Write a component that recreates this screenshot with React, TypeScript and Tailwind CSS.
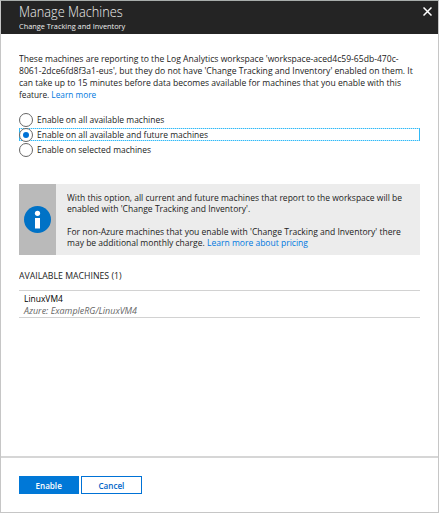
import type { ReactNode } from "react";

function Radio({ label, checked }: { label: string; checked?: boolean }) {
  return (
    <label className="relative flex h-[15px] items-center">
      {checked && (
        <span className="absolute inset-x-0 top-px bottom-px bg-[repeating-linear-gradient(90deg,#30baf8_0px,#30baf8_1px,#b4e6fc_1px,#b4e6fc_2px)] p-px">
          <span className="block h-full bg-white" />
        </span>
      )}
      <span className="relative flex size-[14px] shrink-0 items-center justify-center rounded-full border border-[#666] bg-white">
        {checked && <span className="size-[6px] rounded-full bg-[#0072d6]" />}
      </span>
      <span className="mt-[2px] ml-1 origin-left scale-x-[0.89] whitespace-nowrap">{label}</span>
    </label>
  );
}

function Line({ children, stretch = "scale-x-[0.89]" }: { children: ReactNode; stretch?: string }) {
  return <div className={`w-max origin-left whitespace-nowrap ${stretch}`}>{children}</div>;
}

export default function App() {
  return (
    <div className="flex h-[513px] w-[439px] flex-col overflow-hidden border border-[#c6c6c6] border-t-[#a8adab] bg-white font-['Open_Sans','Noto_Sans',sans-serif] text-[9.5px] text-[#222]">
      <header className="flex h-[33px] shrink-0 justify-between bg-[#242424] pl-[18px] text-[#eee]">
        <div>
          <h1 className="mt-[2px] h-[18px] origin-left scale-x-[0.91] text-[14px] leading-[18px] font-light">Manage Machines</h1>
          <p className="h-[10px] origin-left scale-x-[0.92] text-[8px] leading-[9px]">Change Tracking and Inventory</p>
        </div>
        <svg className="mt-[6px] mr-[6px] size-[9px]" viewBox="0 0 9 9" stroke="#fff" strokeWidth="1.5">
          <path d="M.5.5l8 8M8.5.5l-8 8" />
        </svg>
      </header>
      <main className="flex flex-1 flex-col px-[18px]">
        <div className="mt-[19px] h-[48px] w-[401px] leading-[12px]">
          <Line stretch="scale-x-[0.904]">These machines are reporting to the Log Analytics workspace 'workspace-aced4c59-65db-470c-</Line>
          <Line stretch="scale-x-[0.904]">8061-2dce6fd8f3a1-eus', but they do not have 'Change Tracking and Inventory' enabled on them. It</Line>
          <Line stretch="scale-x-[0.9]">can take up to 15 minutes before data becomes available for machines that you enable with this</Line>
          <Line stretch="scale-x-[0.87]">feature. <a className="text-[#0078e0]">Learn more</a></Line>
        </div>
        <div className="mt-[11px]">
          <Radio label="Enable on all available machines" />
          <Radio label="Enable on all available and future machines" checked />
          <Radio label="Enable on selected machines" />
        </div>
        <section className="mt-[27px] flex h-[71px] bg-[#ececec]">
          <div className="flex w-[37px] shrink-0 items-center justify-center bg-[#bababa]">
            <svg className="size-[27px]" viewBox="0 0 27 27">
              <circle cx="13.5" cy="13.5" r="13.5" fill="#0072c6" />
              <circle cx="13.5" cy="7.3" r="2.6" fill="#fff" />
              <path d="M11 12h5v10.5h-5z" fill="#fff" />
            </svg>
          </div>
          <div className="mt-[8px] ml-[11px] leading-[11.3px]">
            <Line stretch="scale-x-[0.894]">With this option, all current and future machines that report to the workspace will be</Line>
            <Line stretch="scale-x-[0.9]">enabled with 'Change Tracking and Inventory'.</Line>
            <div className="h-[11px]" />
            <Line stretch="scale-x-[0.9]">For non-Azure machines that you enable with 'Change Tracking and Inventory' there</Line>
            <Line stretch="scale-x-[0.898]">may be additional monthly charge. <a className="text-[#0078e0]">Learn more about pricing</a></Line>
          </div>
        </section>
        <h2 className="mt-[15px] h-[12px] leading-[12px]">
          <Line stretch="scale-x-[0.92]">AVAILABLE MACHINES (1)</Line>
        </h2>
        <div className="mt-[8px] h-[28px] border-y border-[#d2d2d2] pl-[5px] leading-[12px]">
          <div className="mt-[2px] text-black">
            <Line>LinuxVM4</Line>
          </div>
          <div className="text-[#666] italic">
            <Line stretch="scale-x-[0.94]">Azure: ExampleRG/LinuxVM4</Line>
          </div>
        </div>
      </main>
      <footer className="flex h-[56px] shrink-0 gap-[2px] border-t-2 border-[#d6d6d6] px-[18px] pt-[18px] text-[9px] leading-[18px] font-semibold">
        <button className="flex h-[18px] w-[60px] items-center justify-center border border-[#0078d7] bg-[#0078d7] text-white">
          <span className="mt-px scale-x-[0.9]">Enable</span>
        </button>
        <button className="flex h-[18px] w-[61px] items-center justify-center border border-[#0072d6] bg-white text-[#0064c8]">
          <span className="mt-px scale-x-[0.9]">Cancel</span>
        </button>
      </footer>
    </div>
  );
}
